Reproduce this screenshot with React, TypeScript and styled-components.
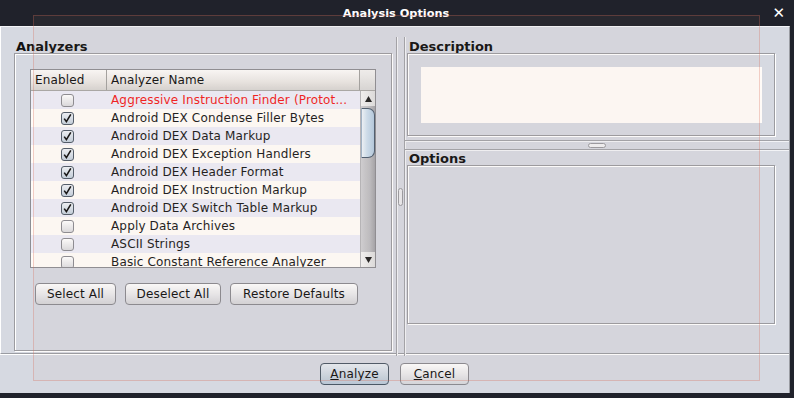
import styled, { createGlobalStyle } from 'styled-components'

const GlobalStyle = createGlobalStyle`
  html, body {
    margin: 0;
    padding: 0;
    background: #20222b;
  }
  body {
    font-family: "DejaVu Sans", "Liberation Sans", sans-serif;
    font-size: 12px;
  }
`

const Frame = styled.div`
  position: relative;
  width: 794px;
  height: 398px;
  background: #20222b;
  overflow: hidden;
`
const TitleBar = styled.div`
  height: 26px;
  display: grid;
  grid-template-columns: 1fr auto 1fr;
  align-items: center;
  color: #ffffff;
`
const Title = styled.div`
  grid-column: 2;
  font-weight: bold;
  font-size: 11.3px;
  padding-right: 2px;
`
const Close = styled.div`
  justify-self: end;
  padding-right: 9px;
  font-size: 15px;
  font-weight: bold;
  line-height: 1;
`
const Window = styled.div`
  width: 790px;
  height: 367px;
  background: #d6d9e1;
  display: flex;
  flex-direction: column;
  box-sizing: border-box;
  border-top: 1px solid #f4f5f8;
  border-right: 1px solid #9a9ca2;
`
const Content = styled.div`
  height: 327px;
  display: flex;
  box-sizing: border-box;
  border-left: 1px solid #ffffff;
  border-bottom: 1px solid #9a9ca2;
  box-shadow: 0 1px 0 #ffffff;
`
const Pane = styled.div<{ $w: number; $pl: number; $pr: number }>`
  width: ${p => p.$w}px;
  padding: 0 ${p => p.$pr}px 0 ${p => p.$pl}px;
  box-sizing: border-box;
  display: flex;
  flex-direction: column;
`
const Section = styled.div<{ $h: number }>`
  height: ${p => p.$h}px;
  display: flex;
  flex-direction: column;
`
const Label = styled.div<{ $mt?: number }>`
  font-weight: bold;
  font-size: 13px;
  color: #111;
  height: 16px;
  line-height: 20px;
  padding-left: 2px;
  margin-top: ${p => p.$mt ?? 10}px;
`
const Group = styled.div<{ $mb?: number }>`
  flex: 1;
  margin-bottom: ${p => p.$mb ?? 2}px;
  margin-right: 1px;
  border: 1px solid #9b9ba0;
  box-shadow: inset 1px 1px 0 #ffffff, 1px 1px 0 #ffffff;
  display: flex;
  flex-direction: column;
`
const AnalyzerGroup = styled(Group)`
  padding: 15px 15px 19px 15px;
`
const Table = styled.div`
  height: 197px;
  border: 1px solid #8e8e93;
  background: #fdfaf6;
  display: flex;
  flex-direction: column;
  overflow: hidden;
`
const HeaderRow = styled.div`
  height: 20px;
  display: flex;
  border-bottom: 1px solid #a9a8a6;
  background: linear-gradient(#fbfaf9, #e9e6e3 60%, #d8d5d2);
  flex-shrink: 0;
`
const HeaderCell = styled.div<{ $w?: number }>`
  ${p => (p.$w ? `width: ${p.$w}px;` : 'flex: 1;')}
  box-sizing: border-box;
  padding-left: 4px;
  line-height: 20px;
  color: #111;
  letter-spacing: 0.15px;
  border-right: 1px solid #a3a2a0;
`
const Corner = styled.div`
  width: 15px;
  background: linear-gradient(#f2f1f0, #d9d8d7);
`
const Body = styled.div`
  flex: 1;
  display: flex;
  overflow: hidden;
`
const Rows = styled.div`
  flex: 1;
  overflow: hidden;
`
const Row = styled.div<{ $odd: boolean }>`
  height: 18px;
  display: flex;
  align-items: center;
  background: ${p => (p.$odd ? '#ededf7' : '#fffcf8')};
`
const CheckCell = styled.div`
  width: 76px;
  padding-right: 3px;
  box-sizing: border-box;
  display: flex;
  justify-content: center;
`
const NameCell = styled.div<{ $red: boolean }>`
  flex: 1;
  padding-left: 4px;
  white-space: nowrap;
  overflow: hidden;
  letter-spacing: 0.15px;
  color: ${p => (p.$red ? '#f21d1d' : '#1a1a1a')};
`
const Box = styled.div<{ $on: boolean }>`
  width: 13px;
  height: 13px;
  box-sizing: border-box;
  border-radius: 3px;
  border: 1px solid ${p => (p.$on ? '#4e5a68' : '#8c8c92')};
  background: ${p =>
    p.$on ? 'linear-gradient(#eef2f7, #c4d0dd)' : 'linear-gradient(#ffffff, #dcdcdf)'};
  display: flex;
  align-items: center;
  justify-content: center;
`
const ScrollBar = styled.div`
  width: 15px;
  display: flex;
  flex-direction: column;
  background: linear-gradient(90deg, #d0d0d3, #bcbcc0 65%, #a4a4a9);
  border-left: 1px solid #b6b6b9;
  box-sizing: border-box;
`
const Arrow = styled.div`
  height: 15px;
  display: flex;
  align-items: center;
  justify-content: center;
  background: linear-gradient(90deg, #f3f3f3, #dedede);
`
const Track = styled.div`
  flex: 1;
  padding-top: 2px;
`
const Thumb = styled.div`
  height: 50px;
  box-sizing: border-box;
  border: 1px solid #4c5c6e;
  border-left-color: #9fb4c8;
  border-radius: 0 7px 7px 0;
  background: linear-gradient(90deg, #eef4f9, #cfe0ee 40%, #b4cadf);
`
const Buttons = styled.div`
  display: flex;
  gap: 9px;
  margin-top: 15px;
  padding-left: 5px;
`
const Button = styled.div<{ $w: number; $default?: boolean }>`
  width: ${p => p.$w}px;
  height: 22px;
  box-sizing: border-box;
  border: 1px solid ${p => (p.$default ? '#4b5866' : '#8a8a90')};
  border-radius: 4px;
  background: ${p =>
    p.$default ? 'linear-gradient(#e6ebf1, #b9c6d4)' : 'linear-gradient(#fdfdfd, #e7e7ea 55%, #d4d4d8)'};
  display: flex;
  align-items: center;
  justify-content: center;
  color: #111;
  font-size: 12px;
  letter-spacing: 0.15px;
`
const VSplit = styled.div`
  width: 12px;
  display: flex;
  justify-content: space-between;
  align-items: center;
  padding: 10px 1px 0 2px;
  margin-bottom: -3px;
  box-sizing: border-box;
`
const VLine = styled.div`
  width: 1px;
  align-self: stretch;
  background: #a2a3a8;
  box-shadow: 1px 0 0 #f2f3f6;
`
const VHandle = styled.div`
  width: 3px;
  height: 16px;
  border: 1px solid #9a9aa0;
  border-radius: 3px;
  background: #e9e9ec;
`
const HSplit = styled.div`
  height: 10px;
  margin: 3px -13px 0 -2px;
  display: flex;
  flex-direction: column;
  justify-content: space-between;
  align-items: center;
`
const HLine = styled.div`
  height: 1px;
  align-self: stretch;
  background: #a2a3a8;
  box-shadow: 0 1px 0 #f2f3f6;
`
const HHandle = styled.div`
  width: 16px;
  height: 3px;
  border: 1px solid #9a9aa0;
  border-radius: 3px;
  background: #f0f0f2;
`
const DescGroup = styled(Group)`
  padding: 13px 12px 12px 13px;
`
const TextArea = styled.div`
  height: 56px;
  background: #fffbf8;
`
const Footer = styled.div`
  flex: 1;
  display: flex;
  justify-content: center;
  align-items: center;
  gap: 11px;
`
const Overlay = styled.div`
  position: absolute;
  left: 33px;
  top: 15px;
  width: 727px;
  height: 366px;
  box-sizing: border-box;
  border: 1px solid rgba(220, 110, 90, 0.3);
  background: rgba(205, 150, 140, 0.05);
  pointer-events: none;
`

const analyzers: [string, boolean, boolean?][] = [
  ['Aggressive Instruction Finder (Protot...', false, true],
  ['Android DEX Condense Filler Bytes', true],
  ['Android DEX Data Markup', true],
  ['Android DEX Exception Handlers', true],
  ['Android DEX Header Format', true],
  ['Android DEX Instruction Markup', true],
  ['Android DEX Switch Table Markup', true],
  ['Apply Data Archives', false],
  ['ASCII Strings', false],
  ['Basic Constant Reference Analyzer', false],
]

function Check({ on }: { on: boolean }) {
  return (
    <Box $on={on}>
      {on && (
        <svg width="11" height="11" viewBox="0 0 11 11">
          <path d="M2.2 5.6 L4.4 8.6 L8.8 1.4" fill="none" stroke="#111" strokeWidth="1.6" />
        </svg>
      )}
    </Box>
  )
}

function Tri({ up }: { up: boolean }) {
  return (
    <svg width="9" height="8" viewBox="0 0 9 8">
      <path d={up ? 'M4.5 1 L8 7 L1 7 Z' : 'M1 1 L8 1 L4.5 7 Z'} fill="#222" />
    </svg>
  )
}

export default function App() {
  return (
    <Frame>
      <GlobalStyle />
      <TitleBar>
        <Title>Analysis Options</Title>
        <Close>✕</Close>
      </TitleBar>
      <Window>
        <Content>
          <Pane $w={393} $pl={13} $pr={1}>
            <Label>Analyzers</Label>
            <AnalyzerGroup>
              <Table>
                <HeaderRow>
                  <HeaderCell $w={76}>Enabled</HeaderCell>
                  <HeaderCell>Analyzer Name</HeaderCell>
                  <Corner />
                </HeaderRow>
                <Body>
                  <Rows>
                    {analyzers.map(([name, on, red], i) => (
                      <Row key={name} $odd={i % 2 === 0}>
                        <CheckCell>
                          <Check on={on} />
                        </CheckCell>
                        <NameCell $red={!!red}>{name}</NameCell>
                      </Row>
                    ))}
                  </Rows>
                  <ScrollBar>
                    <Arrow>
                      <Tri up />
                    </Arrow>
                    <Track>
                      <Thumb />
                    </Track>
                    <Arrow>
                      <Tri up={false} />
                    </Arrow>
                  </ScrollBar>
                </Body>
              </Table>
              <Buttons>
                <Button $w={81}>Select All</Button>
                <Button $w={96}>Deselect All</Button>
                <Button $w={128}>Restore Defaults</Button>
              </Buttons>
            </AnalyzerGroup>
          </Pane>
          <VSplit>
            <VLine />
            <VHandle />
            <VLine />
          </VSplit>
          <Pane $w={383} $pl={1} $pr={13}>
            <Section $h={110}>
              <Label>Description</Label>
              <DescGroup $mb={1}>
                <TextArea />
              </DescGroup>
            </Section>
            <HSplit>
              <HLine />
              <HHandle />
              <HLine />
            </HSplit>
            <Section $h={176}>
              <Label $mt={-1}>Options</Label>
              <Group />
            </Section>
          </Pane>
        </Content>
        <Footer>
          <Button $w={69} $default>
            <u>A</u>nalyze
          </Button>
          <Button $w={69}>
            <u>C</u>ancel
          </Button>
        </Footer>
      </Window>
      <Overlay />
    </Frame>
  )
}
